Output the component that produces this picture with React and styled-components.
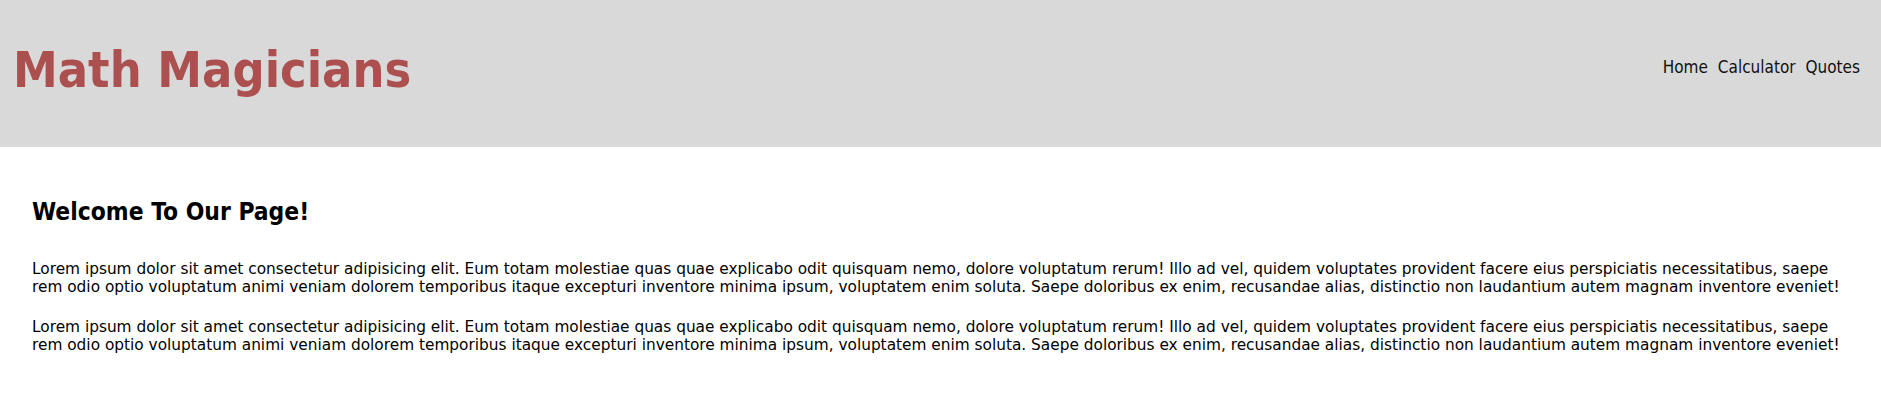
import React from 'react';
import styled, { createGlobalStyle } from 'styled-components';

const Global = createGlobalStyle`
  body { margin: 0; font-family: "DejaVu Sans", sans-serif; background: #fff; color: #000; }
`;

const Header = styled.header`
  display: flex;
  align-items: center;
  justify-content: space-between;
  height: 147px;
  background: #d9d9d9;
  padding: 0 21px 0 13px;
  box-sizing: border-box;
`;

const Title = styled.h1`
  margin: 0 0 8px;
  font-family: "DejaVu Sans Condensed", "DejaVu Sans", sans-serif;
  font-size: 50px;
  font-weight: bold;
  color: #ab4f4f;
`;

const Nav = styled.nav`
  display: flex;
  gap: 10px;
  margin-bottom: 14px;
`;

const NavLink = styled.a`
  font-family: "DejaVu Sans Condensed", "DejaVu Sans", sans-serif;
  font-size: 17px;
  color: #111;
  text-decoration: none;
`;

const Main = styled.main`
  padding: 50px 28px 0 32px;
`;

const Heading = styled.h2`
  margin: 0 0 34px;
  font-family: "DejaVu Sans Condensed", "DejaVu Sans", sans-serif;
  font-size: 24.4px;
  font-weight: bold;
`;

const Para = styled.p`
  margin: 0 0 22px;
  font-size: 15.35px;
  line-height: 18px;
`;

const text = 'Lorem ipsum dolor sit amet consectetur adipisicing elit. Eum totam molestiae quas quae explicabo odit quisquam nemo, dolore voluptatum rerum! Illo ad vel, quidem voluptates provident facere eius perspiciatis necessitatibus, saepe rem odio optio voluptatum animi veniam dolorem temporibus itaque excepturi inventore minima ipsum, voluptatem enim soluta. Saepe doloribus ex enim, recusandae alias, distinctio non laudantium autem magnam inventore eveniet!';

export default function App() {
  return (
    <>
      <Global />
      <Header>
        <Title>Math Magicians</Title>
        <Nav>
          <NavLink href="#">Home</NavLink>
          <NavLink href="#">Calculator</NavLink>
          <NavLink href="#">Quotes</NavLink>
        </Nav>
      </Header>
      <Main>
        <Heading>Welcome To Our Page!</Heading>
        <Para>{text}</Para>
        <Para>{text}</Para>
      </Main>
    </>
  );
}
